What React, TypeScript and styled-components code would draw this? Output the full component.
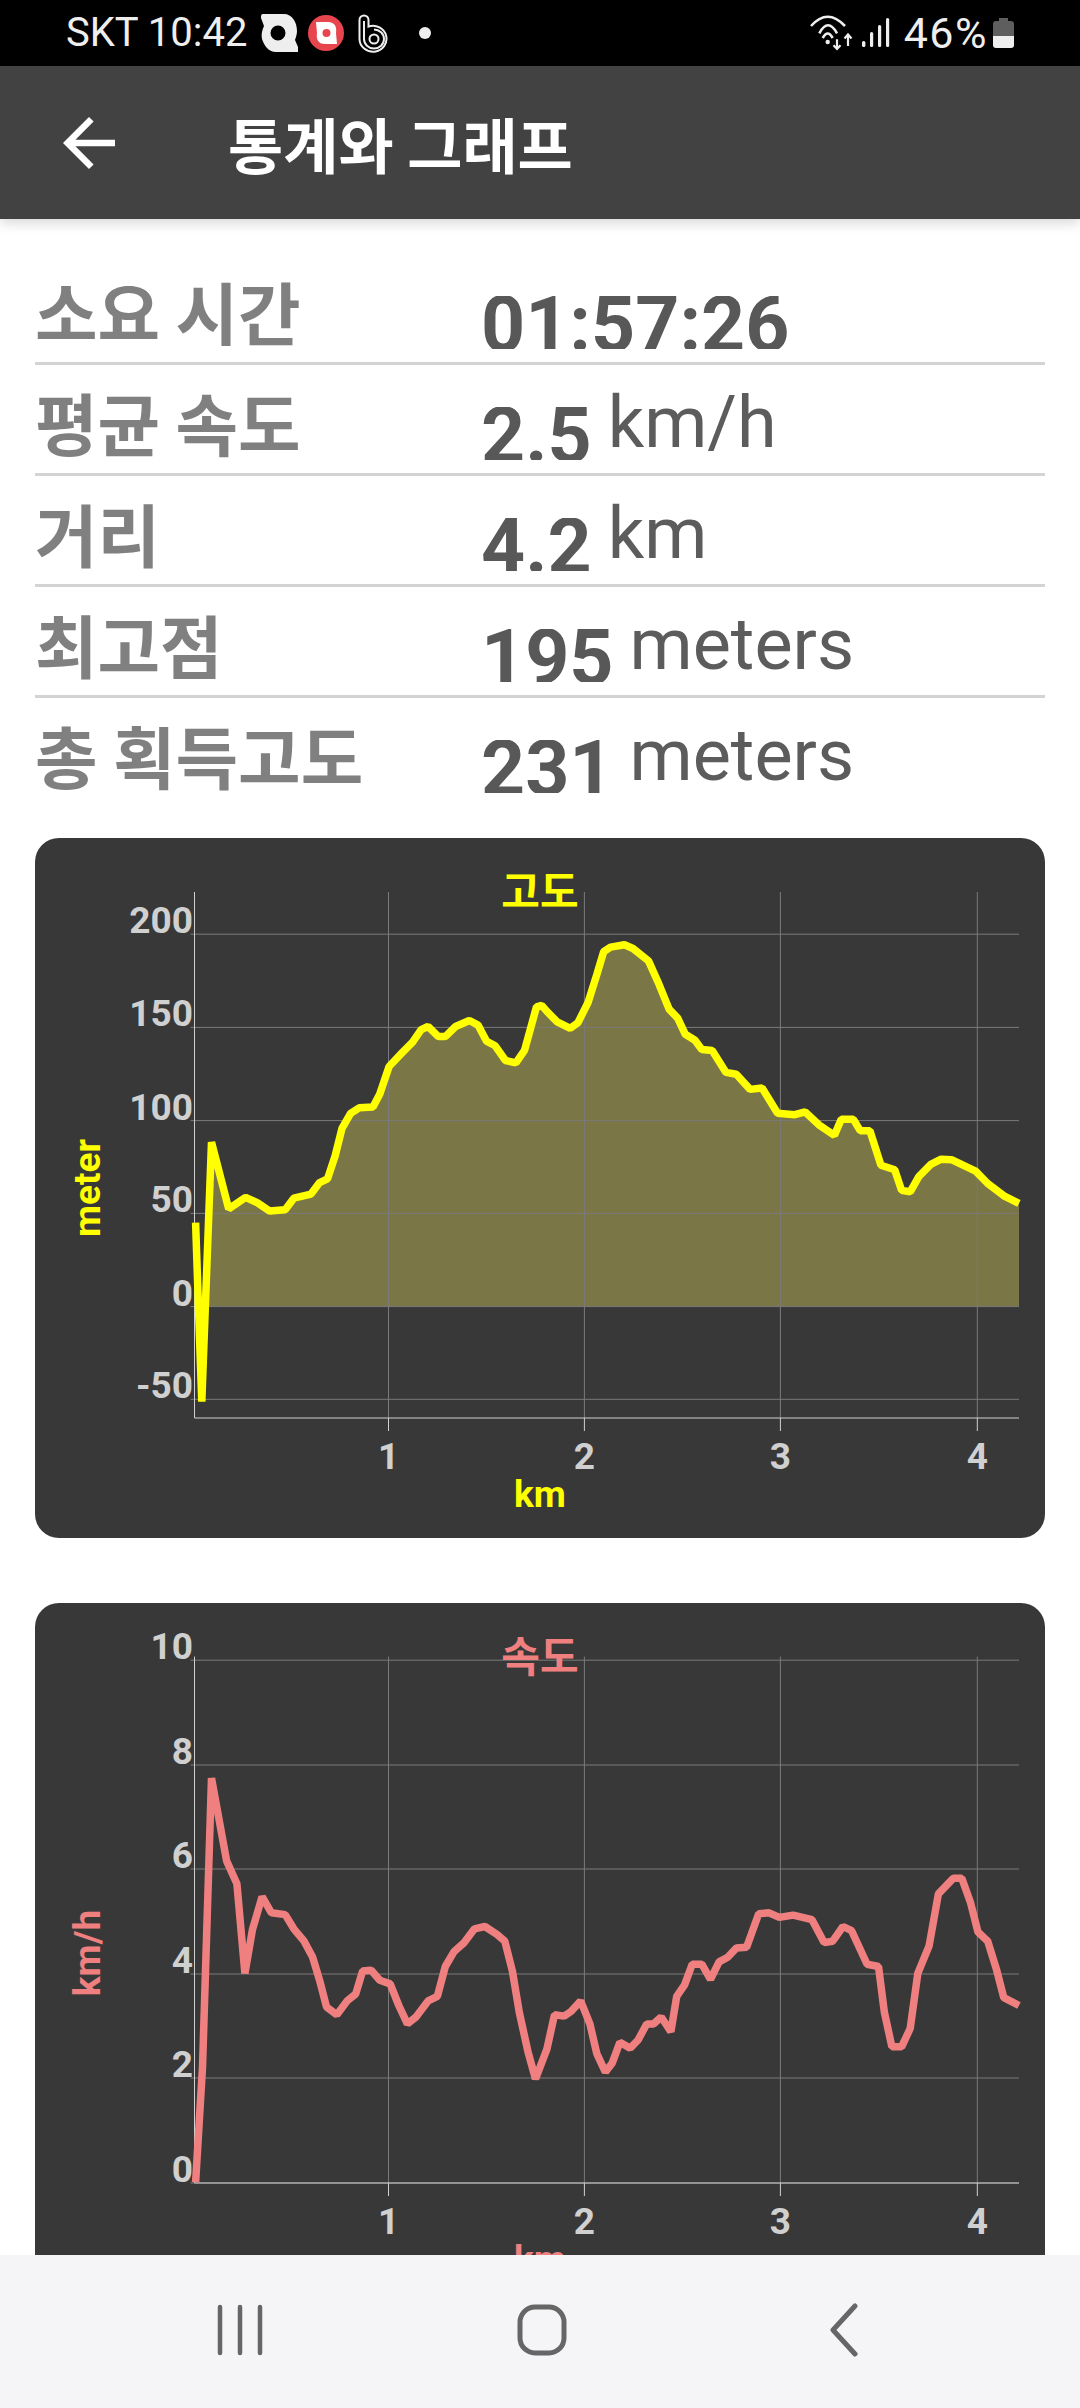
import React from "react";
import styled, { createGlobalStyle } from "styled-components";

type Point = [number, number];

const GlobalStyle = createGlobalStyle`
  html, body {
    margin: 0;
    padding: 0;
    background: #fff;
    overflow: hidden;
  }
`;

const Screen = styled.div`
  width: 1080px;
  height: 2408px;
  display: flex;
  flex-direction: column;
  overflow: hidden;
  font-family: Roboto, "Noto Sans CJK KR", sans-serif;
`;

const StatusBar = styled.div`
  flex: none;
  height: 66px;
  box-sizing: border-box;
  padding: 0 66px;
  background: #000;
  color: #eee;
  display: flex;
  align-items: center;
  justify-content: space-between;
`;

const StatusGroup = styled.div`
  display: flex;
  align-items: center;
`;

const StatusText = styled.span<{ $size: number; $after: number; $spacing?: number }>`
  font-size: ${(p) => p.$size}px;
  line-height: 66px;
  font-weight: 400;
  letter-spacing: ${(p) => p.$spacing ?? 0}px;
  margin-right: ${(p) => p.$after}px;
`;

const StatusIcon = styled.svg<{ $after?: number }>`
  display: block;
  flex: none;
  margin-right: ${(p) => p.$after ?? 0}px;
`;

const AppBar = styled.header`
  flex: none;
  position: relative;
  z-index: 1;
  height: 153px;
  background: #424242;
  box-shadow: 0 4px 12px rgba(0, 0, 0, 0.16);
  display: flex;
  align-items: center;
  padding-left: 50px;
`;

const BackIcon = styled.svg`
  display: block;
  flex: none;
  margin-right: 100px;
`;

const AppTitle = styled.h1`
  margin: 0;
  color: #fff;
  font-family: "Noto Sans CJK KR", sans-serif;
  font-size: 60px;
  font-weight: 700;
  line-height: 1;
`;

const Content = styled.main`
  flex: 1;
  min-height: 0;
  overflow: hidden;
  box-sizing: border-box;
  padding: 35px 35px 0;
`;

const StatRow = styled.div<{ $last?: boolean }>`
  height: 111px;
  box-sizing: border-box;
  display: flex;
  align-items: flex-start;
  border-bottom: ${(p) => (p.$last ? "none" : "3px solid #d3d3d3")};
`;

const StatLabel = styled.div`
  flex: none;
  width: 446px;
  margin-top: 24px;
  color: #808080;
  font-family: "Noto Sans CJK KR", sans-serif;
  font-size: 68px;
  font-weight: 700;
  line-height: 66px;
`;

const StatValue = styled.div`
  flex: none;
  height: 53px;
  margin-top: 42px;
  overflow: hidden;
  color: #585858;
  font-size: 77px;
  font-weight: 700;
  line-height: 58px;
`;

const StatUnit = styled.div`
  margin-top: 18px;
  margin-left: 16px;
  color: #5c5c5c;
  font-size: 72px;
  font-weight: 400;
  line-height: 80px;
`;

const ChartCard = styled.section<{ $gap: number }>`
  margin-top: ${(p) => p.$gap}px;
  width: 1010px;
  height: 700px;
  flex: none;
  background: #383838;
  border-radius: 24px;
  overflow: hidden;
`;

const ChartSvg = styled.svg`
  display: block;
`;

const TickText = styled.text`
  font-family: Roboto, sans-serif;
  font-size: 37px;
  font-weight: 700;
  fill: #d0d0d0;
`;

const AxisTitle = styled.text`
  font-family: Roboto, sans-serif;
  font-size: 37px;
  font-weight: 700;
`;

const ChartTitle = styled.text`
  font-family: "Noto Sans CJK KR", sans-serif;
  font-size: 42px;
  font-weight: 700;
`;

const NavBar = styled.nav`
  flex: none;
  position: relative;
  z-index: 1;
  height: 153px;
  box-sizing: border-box;
  padding: 0 0 4px 89px;
  background: #f5f5f7;
  display: grid;
  grid-template-columns: repeat(3, 302px);
  align-items: center;
  justify-items: center;
`;

const NavIcon = styled.svg`
  display: block;
`;

// traced off the screenshot, x/y are pixels of two overlapping crops
const traced = (points: Point[], originX: number, originY: number): Point[] =>
  points.map(([x, y]) => [originX + x / 2.904 - 35, originY + y / 2.178]);

const elevationLine: Point[] = [
  ...traced(
    [
      [510, 855], [520, 1080], [528, 1245], [540, 1000], [556, 680], [606, 825], [655, 800],
      [690, 812], [725, 830], [770, 827], [795, 802], [845, 793], [870, 768], [893, 760],
      [915, 710], [935, 650], [960, 617], [985, 605], [1025, 603], [1045, 575], [1072, 515],
      [1110, 485], [1140, 462], [1165, 435], [1185, 428], [1215, 450], [1235, 450], [1265, 428],
      [1305, 415], [1330, 425], [1355, 460], [1380, 470], [1410, 502], [1440, 507], [1465, 480],
      [1500, 385], [1515, 382],
    ],
    20,
    -8,
  ),
  ...traced(
    [
      [20, 395], [50, 418], [88, 432], [110, 420], [140, 375], [165, 315], [185, 265],
      [205, 255], [245, 250], [270, 258], [315, 285], [345, 335], [375, 390], [400, 410],
      [422, 445], [450, 458], [470, 478], [500, 480], [540, 528], [570, 532], [610, 565],
      [645, 562], [690, 617], [740, 620], [770, 614], [810, 642], [855, 665], [875, 630],
      [910, 630], [930, 655], [958, 655], [990, 730], [1030, 740], [1050, 785], [1075, 788],
      [1100, 755], [1135, 728], [1165, 717], [1195, 718], [1265, 743], [1300, 770], [1350, 798],
      [1391, 813],
    ],
    540,
    -8,
  ),
];

const speedLine: Point[] = [
  ...traced(
    [
      [510, 1290], [530, 1040], [556, 410], [600, 590], [630, 640], [653, 835], [675, 740],
      [703, 668], [730, 703], [770, 707], [795, 738], [825, 765], [850, 800], [870, 850],
      [890, 908], [920, 925], [950, 895], [975, 880], [995, 830], [1020, 828], [1045, 850],
      [1075, 858], [1100, 905], [1125, 945], [1150, 930], [1185, 895], [1212, 885], [1235, 820],
      [1260, 788], [1290, 768], [1320, 738], [1350, 733], [1385, 750], [1408, 765], [1430, 830],
      [1450, 920], [1475, 1005], [1497, 1065],
    ],
    20,
    -13,
  ),
  ...traced(
    [
      [20, 1000], [42, 925], [70, 928], [90, 918], [118, 895], [145, 945], [165, 1010],
      [190, 1050], [210, 1030], [232, 985], [262, 998], [285, 980], [310, 945], [330, 945],
      [352, 930], [380, 962], [397, 885], [420, 860], [442, 815], [470, 815], [495, 848],
      [520, 810], [545, 800], [570, 780], [600, 778], [635, 705], [665, 703], [695, 713],
      [735, 708], [790, 718], [825, 768], [850, 765], [880, 733], [905, 742], [950, 815],
      [983, 820], [1000, 920], [1022, 995], [1050, 995], [1075, 955], [1097, 835], [1130, 775],
      [1157, 662], [1200, 628], [1225, 628], [1250, 680], [1272, 745], [1300, 765], [1325, 825],
      [1347, 888], [1391, 905],
    ],
    540,
    -13,
  ),
];

const X_TICKS = [
  { label: "1", x: 353.5 },
  { label: "2", x: 549.4 },
  { label: "3", x: 745.4 },
  { label: "4", x: 942.3 },
];
const AXIS_LEFT = 159.5;
const AXIS_RIGHT = 984;

type ChartProps = {
  title: string;
  unit: string;
  color: string;
  unitWeight: number;
  line: Point[];
  yTicks: { label: string; y: number }[];
  axisY: number;
  gridTop: number;
  fillTo?: number;
};

function Chart({ title, unit, color, unitWeight, line, yTicks, axisY, gridTop, fillTo }: ChartProps) {
  const linePath = line.map(([x, y]) => `${x.toFixed(1)},${y.toFixed(1)}`).join(" ");
  return (
    <ChartSvg width={1010} height={700} viewBox="0 0 1010 700">
      {fillTo !== undefined && (
        <polygon
          points={`${linePath} ${AXIS_RIGHT},${fillTo} ${AXIS_LEFT},${fillTo}`}
          fill="#7b7645"
        />
      )}
      {yTicks.map((t) => (
        <g key={t.label}>
          <line x1={155.5} x2={AXIS_RIGHT} y1={t.y} y2={t.y} stroke="#7a7a7a" strokeWidth={1} />
          <TickText x={158} y={t.y - 1} textAnchor="end">
            {t.label}
          </TickText>
        </g>
      ))}
      {X_TICKS.map((t) => (
        <g key={t.label}>
          <line x1={t.x} x2={t.x} y1={gridTop} y2={axisY} stroke="#7a7a7a" strokeWidth={1} />
          <line x1={t.x} x2={t.x} y1={axisY} y2={axisY + 13} stroke="#d0d0d0" strokeWidth={1} />
          <TickText x={t.x} y={631} textAnchor="middle">
            {t.label}
          </TickText>
        </g>
      ))}
      <line x1={AXIS_LEFT} x2={AXIS_LEFT} y1={gridTop} y2={axisY} stroke="#d0d0d0" strokeWidth={1} />
      <line x1={AXIS_LEFT} x2={AXIS_RIGHT} y1={axisY} y2={axisY} stroke="#d0d0d0" strokeWidth={1} />
      <polyline points={linePath} fill="none" stroke={color} strokeWidth={7.5} strokeLinejoin="bevel" />
      <ChartTitle x={505} y={69} textAnchor="middle" fill={color}>
        {title}
      </ChartTitle>
      <AxisTitle x={505} y={669} textAnchor="middle" fill={color}>
        km
      </AxisTitle>
      <AxisTitle
        x={65}
        y={350}
        textAnchor="middle"
        fill={color}
        fontWeight={unitWeight}
        transform="rotate(-90 65 350)"
      >
        {unit}
      </AxisTitle>
    </ChartSvg>
  );
}

function StatusBarRow() {
  return (
    <StatusBar>
      <StatusGroup>
        <StatusText $size={40} $after={14}>SKT 10:42</StatusText>
        <StatusIcon $after={10} width={37} height={38} viewBox="0 0 37 38">
          <path
            fillRule="evenodd"
            fill="#eee"
            d="M2 0H23C31 0 36 8 36 17C36 20 35 23 34 26L37 33V38H15C7 38 3 31 1 25C0 21 1 16 3 12L0 4C0 2 0 0 2 0ZM17 11.500a7.500 7.500 0 1 0 0 15a7.500 7.500 0 1 0 0-15Z"
          />
        </StatusIcon>
        <StatusIcon $after={14} width={36} height={38} viewBox="0 0 36 38">
          <circle cx="18" cy="19" r="18" fill="#e8464f" />
          <path
            fill="#fff"
            d="M8 8H20C27 8 29 13 28 19L29 30H17C10 30 8 25 9 19Z"
          />
          <circle cx="18.500" cy="19" r="4" fill="#e8464f" />
        </StatusIcon>
        <StatusIcon $after={29} width={32} height={39} viewBox="0 0 32 39" fill="none" stroke="#eee" strokeWidth={2}>
          <path d="M1.500 6a4.500 4.500 0 0 1 9 0V12.500A13.500 13 0 1 1 1.500 25Z" />
          <path d="M6 7V25A10 9.500 0 1 0 16 15.500" />
          <circle cx="16" cy="25" r="4.500" />
        </StatusIcon>
        <StatusIcon width={12} height={12} viewBox="0 0 12 12">
          <circle cx="6" cy="6" r="6" fill="#eee" />
        </StatusIcon>
      </StatusGroup>
      <StatusGroup>
        <StatusIcon $after={8} width={44} height={38} viewBox="0 0 44 38" fill="none" stroke="#eee" strokeWidth={2.6}>
          <path d="M1 12Q17.500 -6.600 35 12" />
          <path d="M9.300 19.300Q18 3.300 27 19.300" />
          <path d="M12.700 24Q17.700 15 22.700 24" />
          <circle cx="17.700" cy="28" r="2.200" fill="#eee" stroke="none" />
          <path d="M27 25.300V34.700M23.500 31.200L27 35L30.500 31.200" strokeWidth={2.2} />
          <path d="M38 32V21M34.500 24.500L38 20.500L41.500 24.500" strokeWidth={2.2} />
        </StatusIcon>
        <StatusIcon $after={14} width={28} height={30} viewBox="0 0 28 30" fill="#eee">
          <rect x="0" y="23" width="3.400" height="6" rx="1.500" />
          <rect x="8" y="14" width="3.200" height="15" rx="1.500" />
          <rect x="16" y="7" width="3.200" height="22" rx="1.500" />
          <rect x="24" y="0" width="3.200" height="29" rx="1.500" />
        </StatusIcon>
        <StatusText $size={43} $after={5} $spacing={1.5}>46%</StatusText>
        <StatusIcon width={21} height={30} viewBox="0 0 21 30">
          <path fill="#5e5e5e" d="M6 0H15V3H18Q21 3 21 6V18H0V6Q0 3 3 3H6Z" />
          <path fill="#eee" d="M0 18H21V27Q21 30 18 30H3Q0 30 0 27Z" />
        </StatusIcon>
      </StatusGroup>
    </StatusBar>
  );
}

const stats = [
  { label: "소요 시간", value: "01:57:26" },
  { label: "평균 속도", value: "2.5", unit: "km/h" },
  { label: "거리", value: "4.2", unit: "km" },
  { label: "최고점", value: "195", unit: "meters" },
  { label: "총 획득고도", value: "231", unit: "meters" },
];

export default function App() {
  return (
    <Screen>
      <GlobalStyle />
      <StatusBarRow />
      <AppBar>
        <BackIcon width={78} height={78} viewBox="0 0 24 24" fill="#fff">
          <path d="M20 11H7.830l5.590-5.590L12 4l-8 8 8 8 1.410-1.410L7.830 13H20v-2z" />
        </BackIcon>
        <AppTitle>통계와 그래프</AppTitle>
      </AppBar>
      <Content>
        {stats.map((s, i) => (
          <StatRow key={s.label} $last={i === stats.length - 1}>
            <StatLabel>{s.label}</StatLabel>
            <StatValue>{s.value}</StatValue>
            {s.unit && <StatUnit>{s.unit}</StatUnit>}
          </StatRow>
        ))}
        <ChartCard $gap={29}>
          <Chart
            title="고도"
            unit="meter"
            unitWeight={700}
            color="#ffff00"
            line={elevationLine}
            yTicks={[
              { label: "200", y: 96.2 },
              { label: "150", y: 189.4 },
              { label: "100", y: 282.6 },
              { label: "50", y: 375.4 },
              { label: "0", y: 468.6 },
              { label: "-50", y: 561.3 },
            ]}
            axisY={580}
            gridTop={54}
            fillTo={468.6}
          />
        </ChartCard>
        <ChartCard $gap={65}>
          <Chart
            title="속도"
            unit="km/h"
            unitWeight={400}
            color="#f08080"
            line={speedLine}
            yTicks={[
              { label: "10", y: 57.2 },
              { label: "8", y: 162 },
              { label: "6", y: 266 },
              { label: "4", y: 371 },
              { label: "2", y: 475 },
              { label: "0", y: 580 },
            ]}
            axisY={580}
            gridTop={53.6}
          />
        </ChartCard>
      </Content>
      <NavBar>
        <NavIcon width={46} height={52} viewBox="0 0 46 52" fill="none" stroke="#666" strokeWidth={4.5} strokeLinecap="round">
          <path d="M3 3V49M23 3V49M43 3V49" />
        </NavIcon>
        <NavIcon width={50} height={52} viewBox="0 0 50 52" fill="none" stroke="#666" strokeWidth={5}>
          <rect x="3" y="3" width="44" height="46" rx="15" />
        </NavIcon>
        <NavIcon width={30} height={54} viewBox="0 0 30 54" fill="none" stroke="#666" strokeWidth={5} strokeLinecap="round" strokeLinejoin="round">
          <path d="M26 3L4 27L26 51" />
        </NavIcon>
      </NavBar>
    </Screen>
  );
}
